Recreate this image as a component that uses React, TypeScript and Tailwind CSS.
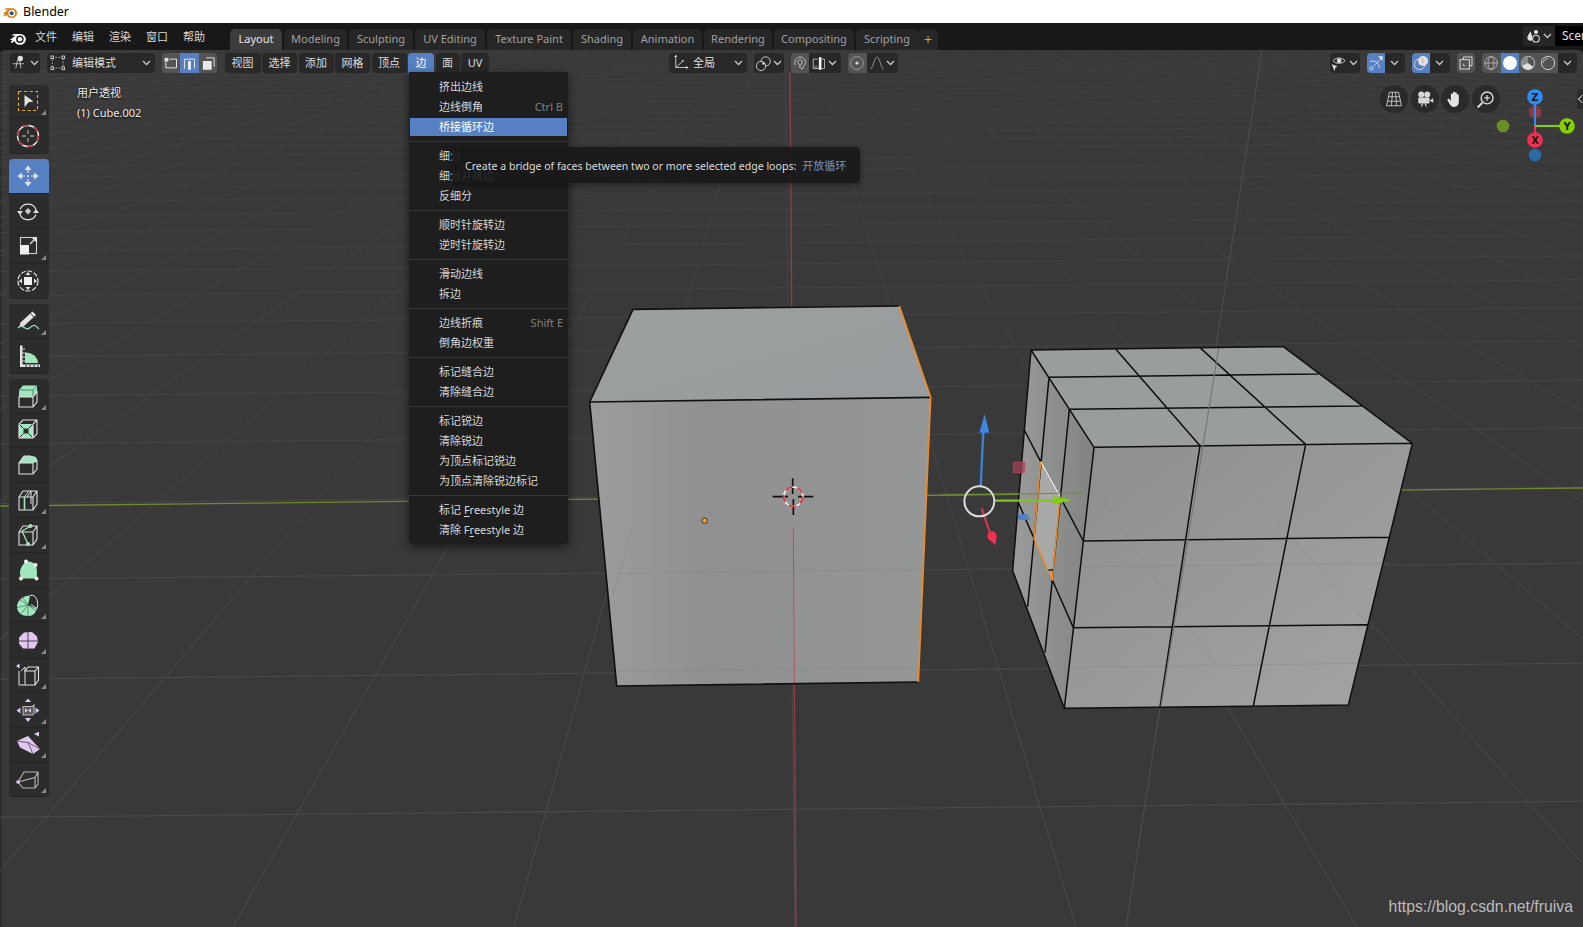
import type { ReactNode } from "react"

const WHITE = "#e2e2e2"
const GREEN = "#a2e6bd"
const PURPLE = "#e0c9f0"

function Ico({ children, size = 24, box = 24 }: { children: ReactNode; size?: number; box?: number }) {
    return (
        <svg width={size} height={size} viewBox={`0 0 ${box} ${box}`} fill="none" stroke={WHITE} strokeWidth="1" className="shrink-0">
            {children}
        </svg>
    )
}

function Chevron({ className = "" }: { className?: string }) {
    return (
        <svg width="9" height="6" viewBox="0 0 9 6" fill="none" stroke="#c8c8c8" strokeWidth="1.3" className={className}>
            <path d="M1 1l3.5 3.5L8 1" />
        </svg>
    )
}

// wire cube used by most of the mesh tools
function Box() {
    return <path d="M3 9L7 3H21V16L17 22H3ZM3 9H17V22M17 9L21 3" strokeWidth="1.1" />
}

const tools: { icon: ReactNode; corner?: boolean; active?: boolean }[][] = [
    [
        {
            corner: true,
            icon: (
                <Ico>
                    <rect x="2.5" y="2.5" width="19" height="19" stroke="#e0a83c" strokeWidth="1.2" strokeDasharray="3.2 2.4" />
                    <path d="M8.5 6l9 6.5-5 .8-4 5z" fill={WHITE} stroke="none" />
                </Ico>
            ),
        },
        {
            icon: (
                <Ico>
                    <circle cx="12" cy="12" r="10.5" stroke="#eeeeee" strokeWidth="1.3" />
                    <circle cx="12" cy="12" r="10.5" stroke="#b8303c" strokeWidth="1.4" strokeDasharray="6 5" />
                    <path d="M12 6v4M12 14v4M6 12h4M14 12h4" stroke="#9a9a9a" strokeWidth="1.3" />
                </Ico>
            ),
        },
    ],
    [
        {
            active: true,
            icon: (
                <Ico>
                    <path d="M12 1.5l3.5 4.5h-7zM12 22.5l3.5-4.5h-7zM1.5 12l4.5-3.5v7zM22.5 12l-4.5-3.5v7z" fill={WHITE} stroke="none" />
                    <path d="M12 6v3M12 15v3M6 12h3M15 12h3" strokeWidth="1.2" />
                    <circle cx="12" cy="12" r="1" fill={WHITE} stroke="none" />
                </Ico>
            ),
        },
        {
            icon: (
                <Ico>
                    <path d="M4 10.5A8.5 8 0 0 1 20 10.5M4 15.5A8.5 8 0 0 0 20 15.5" strokeWidth="1.2" />
                    <path d="M1 12h6l-3 4zM17 14h6l-3-4z" fill={WHITE} stroke="none" />
                    <path d="M12 9l3.2 3.2L12 15.4l-3.2-3.2z" fill="#c8c8c8" stroke="none" />
                </Ico>
            ),
        },
        {
            corner: true,
            icon: (
                <Ico>
                    <rect x="4.5" y="3.5" width="16" height="16" stroke="#cfcfcf" strokeWidth="1.1" />
                    <rect x="4" y="11" width="9" height="9.5" fill="#f0f0f0" stroke="none" />
                    <path d="M14 10l5.5-5.5" strokeWidth="1.3" />
                    <path d="M15.5 3.5H21V9z" fill={WHITE} stroke="none" />
                </Ico>
            ),
        },
        {
            icon: (
                <Ico>
                    <circle cx="12" cy="12" r="10" strokeWidth="1.2" strokeDasharray="5 1.6" />
                    <rect x="8" y="8" width="8" height="8" fill="#f0f0f0" stroke="none" />
                    <path d="M12 3l2.5 3h-5zM12 21l2.5-3h-5zM3 12l3-2.5v5zM21 12l-3-2.5v5z" fill={WHITE} stroke="none" />
                </Ico>
            ),
        },
    ],
    [
        {
            corner: true,
            icon: (
                <Ico>
                    <path d="M2 19C7 13 9 23 13.5 19S19 16 23 20" stroke={GREEN} strokeWidth="1.2" />
                    <path d="M3.5 17.5L4.5 13.5 16.5 2.5 20 6 8 17Z" fill={WHITE} stroke="none" />
                    <path d="M14.5 4.5L18 8" stroke="#2c2c2c" strokeWidth="0.9" />
                </Ico>
            ),
        },
        {
            icon: (
                <Ico>
                    <path d="M9 8.5V19H22A12 11 0 0 0 9 8.5z" fill={GREEN} stroke="none" />
                    <path d="M6.5 1.5H4V23H24V20.5H6.5z" fill={WHITE} stroke="none" />
                    <path d="M6.5 5H9M6.5 9H9M6.5 13H9M6.5 17H9" strokeWidth="1" />
                    <path d="M10 23v-2M14 23v-2M18 23v-2M22 23v-2" stroke="#333333" strokeWidth="1" />
                </Ico>
            ),
        },
    ],
    [
        {
            corner: true,
            icon: (
                <Ico>
                    <path d="M3 6L7 1.5H21V8L17 13H3Z" fill={GREEN} stroke="none" />
                    <path d="M3 6H17L21 1.5M17 6V13" stroke="#3b7a57" strokeWidth="0.8" />
                    <path d="M3 13H17L21 8V18L17 23H3ZM17 13V23" strokeWidth="1.1" />
                </Ico>
            ),
        },
        {
            icon: (
                <Ico>
                    <path d="M3 6H17V20H3Z" fill={GREEN} stroke="none" />
                    <path d="M7.5 10.5h5v5h-5z" fill="#2c2c2c" stroke="none" />
                    <path d="M3 6L7.5 10.5M17 6L12.5 10.5M3 20L7.5 15.5M17 20L12.5 15.5" stroke="#2c2c2c" />
                    <path d="M3 6L7 2H21V16L17 20H3ZM17 6L21 2M17 6V20" strokeWidth="1.1" />
                </Ico>
            ),
        },
        {
            icon: (
                <Ico>
                    <path d="M3 9L8 3H17L21 6V9L17 10H3Z" fill={GREEN} stroke="none" />
                    <circle cx="18" cy="6" r="2.6" fill={GREEN} stroke="none" />
                    <path d="M3 10H17V21H3ZM17 21L21 16V7M3 10L8 3H15" strokeWidth="1.1" />
                </Ico>
            ),
        },
        {
            corner: true,
            icon: (
                <Ico>
                    <Box />
                    <path d="M8.5 9V22" stroke={GREEN} strokeWidth="1.6" />
                    <path d="M8.5 9L12.5 3" stroke={GREEN} strokeWidth="1" />
                    <path d="M11 9L15 3V16" strokeWidth="1" />
                </Ico>
            ),
        },
        {
            corner: true,
            icon: (
                <Ico>
                    <Box />
                    <path d="M6 8L15 3M6 8L12 21" stroke={GREEN} strokeWidth="1.3" />
                    <circle cx="14.5" cy="3" r="2" fill={GREEN} stroke="none" />
                    <circle cx="12" cy="21" r="2" fill={GREEN} stroke="none" />
                </Ico>
            ),
        },
        {
            icon: (
                <Ico>
                    <path d="M10 3.5C14 3.5 17 4 19 6.5 21 9 21.5 14 20.5 20.5H5.5C3.5 16 3.5 13 5 10 6 7.5 8 5.5 10 3.5Z" fill={GREEN} stroke="none" />
                    <g fill="#f6f6f6" stroke="none">
                        <circle cx="10" cy="3.5" r="2" />
                        <circle cx="19.5" cy="7" r="2" />
                        <circle cx="5" cy="20.5" r="2" />
                        <circle cx="20.5" cy="20.5" r="2" />
                    </g>
                </Ico>
            ),
        },
        {
            corner: true,
            icon: (
                <Ico>
                    <path d="M12 12L14 2.5C8 2.5 1 7 1 13.5S6 23 12 23 19 20 21 16L12 12Z" fill={GREEN} stroke="none" />
                    <path d="M12 12L3 6M12 12L1 14.5M12 12L5 21M12 12V23M12 12L20 18M12 12L6 3.5" stroke="#3b7a57" strokeWidth="0.7" />
                    <path d="M14 2.5C20 0.5 23 9 21 15.5L15 11.5" strokeWidth="1" />
                </Ico>
            ),
        },
        {
            corner: true,
            icon: (
                <Ico>
                    <path d="M8 4.5L16 4 21 8.5 22 14 18.5 20.5H7L3 15.5V9.5Z" fill={PURPLE} stroke="none" />
                    <path d="M2.5 13H22M12 4.5V20.5" stroke="#4a4050" strokeWidth="1" />
                </Ico>
            ),
        },
        {
            corner: true,
            icon: (
                <Ico>
                    <path d="M9 4V22H3V8" strokeWidth="1" />
                    <path d="M9 22H19L22.5 17V4H12L9 8H19V22M19 8L22.5 4" strokeWidth="1.1" />
                    <path d="M5 8L9 4" strokeWidth="1" />
                    <path d="M0 3l3.5-2.5v5z" fill={PURPLE} stroke="none" />
                </Ico>
            ),
        },
        {
            corner: true,
            icon: (
                <Ico>
                    <path d="M7 8.5H16.5L18 7V15.5L16.5 17H7Z" stroke="#b8b8b8" strokeWidth="1.1" fill="#5a5a5a" />
                    <path d="M12 0.5l3 3.5h-6zM12 24l3-4h-6zM0.5 12.5l4-3v6zM23.5 12.5l-4-3v6z" fill={PURPLE} stroke="none" />
                    <path d="M9 10.5l3 2-3 2zM15 10.5l-3 2 3 2z" fill={PURPLE} stroke="none" />
                </Ico>
            ),
        },
        {
            corner: true,
            icon: (
                <Ico>
                    <path d="M1 9L12 4 24 17 17 22 4 15.5Z" fill={PURPLE} stroke="none" />
                    <path d="M12 10.5L17 22M1 9L12 10.5 24 17" stroke="#4a4050" strokeWidth="0.8" />
                    <path d="M18 2l5-2.5v5z" fill={PURPLE} stroke="none" />
                </Ico>
            ),
        },
        {
            corner: true,
            icon: (
                <Ico>
                    <path d="M2 15L8 5H22V17L19 21H7ZM2 15L19 10.5 22 5M19 10.5V21" stroke="#b8b8b8" strokeWidth="1.1" />
                    <circle cx="2" cy="15" r="1.8" fill={PURPLE} stroke="none" />
                </Ico>
            ),
        },
    ],
]

function ToolButton({ icon, corner, active }: { icon: ReactNode; corner?: boolean; active?: boolean }) {
    return (
        <div className={`relative flex h-[34.9px] items-center justify-center border-b border-[#242424] pr-[2px] first:rounded-t-[4px] last:rounded-b-[4px] ${active ? "bg-[#5680c2]" : "bg-[#2c2c2c]"}`}>
            {icon}
            {corner && <span className="absolute bottom-[3px] right-[3px] h-0 w-0 border-b-[5px] border-l-[5px] border-b-[#8a8a8a] border-l-transparent" />}
        </div>
    )
}

type MenuEntry = { label: ReactNode; key?: string; hot?: boolean } | "sep"

const menu: MenuEntry[] = [
    { label: "挤出边线" },
    { label: "边线倒角", key: "Ctrl B" },
    { label: "桥接循环边", hot: true },
    "sep",
    { label: "细分" },
    { label: "细分并排边" },
    { label: "反细分" },
    "sep",
    { label: "顺时针旋转边" },
    { label: "逆时针旋转边" },
    "sep",
    { label: "滑动边线" },
    { label: "拆边" },
    "sep",
    { label: "边线折痕", key: "Shift E" },
    { label: "倒角边权重" },
    "sep",
    { label: "标记缝合边" },
    { label: "清除缝合边" },
    "sep",
    { label: "标记锐边" },
    { label: "清除锐边" },
    { label: "为顶点标记锐边" },
    { label: "为顶点清除锐边标记" },
    "sep",
    { label: <>标记 <span className="underline underline-offset-2">F</span>reestyle 边</> },
    { label: <>清除 F<span className="underline underline-offset-2">r</span>eestyle 边</> },
]

const workspaces = [
    { name: "Layout", w: "w-[52px]" },
    { name: "Modeling", w: "w-[63px]" },
    { name: "Sculpting", w: "w-[64px]" },
    { name: "UV Editing", w: "w-[70px]" },
    { name: "Texture Paint", w: "w-[84px]" },
    { name: "Shading", w: "w-[58px]" },
    { name: "Animation", w: "w-[69px]" },
    { name: "Rendering", w: "w-[68px]" },
    { name: "Compositing", w: "w-[80px]" },
    { name: "Scripting", w: "w-[62px]" },
]

const headerMenus = [
    { name: "视图", w: "w-[36px]" },
    { name: "选择", w: "w-[35px]" },
    { name: "添加", w: "w-[35px]" },
    { name: "网格", w: "w-[35px]" },
    { name: "顶点", w: "w-[35px]" },
    { name: "边", w: "w-[26px]" },
    { name: "面", w: "w-[24px]" },
    { name: "UV", w: "w-[28px]" },
]

function BlenderLogo({ size, ring, core }: { size: number; ring: string; core: string }) {
    return (
        <svg width={size} height={size} viewBox="0 0 24 24" className="shrink-0">
            <path d="M1 14.5L9 8.5H3.5L6 6.5H14C19 6.5 22.5 9.5 22.5 13.5S19 21 14.5 21C10.5 21 8 19 7.5 16L5 18C4 18.6 2.5 18.2 2.6 16.6L5 14.5Z" fill={ring} />
            <circle cx="14.5" cy="13.7" r="5" fill={ring === "#ffffff" ? "#181818" : "#ffffff"} />
            <circle cx="14.5" cy="13.7" r="3" fill={core} />
        </svg>
    )
}

function Scene() {
    // fan of grid lines leaves one vanishing point, the others get closer towards it
    const vx = 784
    const vy = -47
    const fan = Array.from({ length: 81 }, (_, i) => 795 + 281 * (i - 40))
    const rows = Array.from({ length: 34 }, (_, n) => vy + 1 / (0.001157 + 0.00022 * n))

    return (
        <svg className="absolute inset-0" width="1583" height="877" viewBox="0 50 1583 877">
            <defs>
                <linearGradient id="gridFade" gradientUnits="userSpaceOnUse" x1="0" y1="60" x2="0" y2="700">
                    <stop offset="0" stopColor="#3d3d3d" />
                    <stop offset="0.4" stopColor="#434343" />
                    <stop offset="1" stopColor="#4a4a4a" />
                </linearGradient>
                <linearGradient id="frontA" x1="0" y1="0" x2="1" y2="0">
                    <stop offset="0" stopColor="#9b9d9d" />
                    <stop offset="0.35" stopColor="#8f908f" />
                    <stop offset="1" stopColor="#959696" />
                </linearGradient>
                <linearGradient id="topA" x1="0" y1="0" x2="1" y2="1">
                    <stop offset="0" stopColor="#9c9f9f" />
                    <stop offset="1" stopColor="#989c9e" />
                </linearGradient>
                <linearGradient id="frontB" x1="0" y1="0" x2="1" y2="1">
                    <stop offset="0" stopColor="#8d8e8e" />
                    <stop offset="1" stopColor="#a3a4a4" />
                </linearGradient>
                <linearGradient id="sideB" x1="0" y1="0" x2="1" y2="0">
                    <stop offset="0" stopColor="#9a9b9a" />
                    <stop offset="1" stopColor="#818482" />
                </linearGradient>
            </defs>

            <rect x="0" y="50" width="1583" height="877" fill="#393939" />
            <rect x="0" y="50" width="1.5" height="877" fill="#2a2a2a" />

            {fan.map((x) => (
                <line key={x} x1={vx} y1={vy} x2={x} y2={927} stroke="url(#gridFade)" strokeWidth="1" />
            ))}
            {rows.map((y) => (
                <line key={y} x1={0} y1={y} x2={1583} y2={y - 16} stroke="url(#gridFade)" strokeWidth="1" />
            ))}

            <line x1="0" y1="506" x2="1583" y2="488" stroke="#6a8a2c" strokeWidth="1.3" />
            <line x1="790" y1="72" x2="796" y2="927" stroke="#8c3f49" strokeWidth="1.3" />
            <line x1="1262" y1="50" x2="1126" y2="927" stroke="#4c4c4c" strokeWidth="1.2" />

            {/* left cube, points read off at 3x */}
            <g transform="translate(580 290) scale(0.33333)" strokeLinejoin="round">
                <path d="M29 336L159 58 958 48 1052 322Z" fill="url(#topA)" />
                <path d="M29 336L1052 322 1015 1176 110 1188Z" fill="url(#frontA)" />
                <path d="M155 720L100 915M90 850L1030 838M110 1143L1020 1133" stroke="#7d7e7e" strokeWidth="2" fill="none" opacity="0.5" />
                <path d="M640 715L643 1180" stroke="#a85560" strokeWidth="3" />
                <path d="M1015 1176L110 1188 29 336 159 58 958 48M29 336L1052 322" stroke="#101010" strokeWidth="5" fill="none" />
                <path d="M958 48L1052 322 1015 1176" stroke="#f08a24" strokeWidth="5" fill="none" />
                <path d="M578 620H624M654 620H700M638 565V612M640 628V675" stroke="#101010" strokeWidth="5" />
                <circle cx="640" cy="620" r="29" fill="none" stroke="#f2f2f2" strokeWidth="5" />
                <circle cx="640" cy="620" r="29" fill="none" stroke="#e02a35" strokeWidth="5" strokeDasharray="22 15" />
                <circle cx="374" cy="692" r="8" fill="#f8a030" stroke="#333333" strokeWidth="3" />
            </g>

            {/* right cube */}
            <g transform="translate(1000 330) scale(0.33333)" strokeLinejoin="round">
                <path d="M93 60L850 50 1237 340 282 352Z" fill="#9a9d9e" />
                <path d="M93 60L282 352 193 1135 38 722Z" fill="url(#sideB)" />
                <path d="M282 352L1237 340 1045 1125 193 1135Z" fill="url(#frontB)" />
                <path d="M122 395L180 500 157 750 102 625Z" fill="#a8aaaa" />
                <path d="M310 515L640 1000M775 510L1120 900M250 710L1170 700M210 1012L1080 1000" stroke="#7f8080" strokeWidth="2" fill="none" opacity="0.55" />
                <path
                    d="M93 60L850 50 1237 340 1045 1125 193 1135 38 722ZM282 352L1237 340M282 352L193 1135M93 60L282 352M147 142L955 132M208 238L1085 228M347 57L600 347M600 53L917 343M600 347L480 1132M917 343L760 1128M250 633L1168 622M220 893L1102 884M147 142L83 830M208 238L135 968M73 300L122 395M180 500L250 633M55 518L102 625M157 750L220 893M122 395L180 500"
                    stroke="#0e0e0e"
                    strokeWidth="4.5"
                    fill="none"
                />
                <path d="M656 54L483 1130" stroke="#767676" strokeWidth="3.5" />
                <path d="M122 395L180 500" stroke="#f4f4f4" strokeWidth="4.5" />
                <path d="M122 395L102 625 157 750 180 500" stroke="#f08a24" strokeWidth="4.5" fill="none" />
                <path d="M145 720H160" stroke="#0e0e0e" strokeWidth="4" />
            </g>

            {/* move gizmo */}
            <line x1="940" y1="495" x2="1083" y2="493" stroke="#6f8f32" strokeWidth="1.2" />
            <g transform="translate(940 400) scale(0.33333)">
                <path d="M122 258L130 95" stroke="#3f80d2" strokeWidth="7" />
                <path d="M134 42L118 98H148Z" fill="#3f86e0" />
                <path d="M165 302H345" stroke="#7fc31c" strokeWidth="7" />
                <path d="M398 300L340 288V314Z" fill="#84cc16" />
                <path d="M125 325L152 405" stroke="#c73a50" strokeWidth="7" />
                <circle cx="156" cy="408" r="14" fill="#f03050" />
                <path d="M143 414L166 436 170 408Z" fill="#f03050" />
                <circle cx="118" cy="304" r="45" fill="none" stroke="#dcdcdc" strokeWidth="6" />
                <path d="M220 187L255 186 253 218 220 218Z" fill="#a04152" fillOpacity="0.75" stroke="#c04a60" strokeWidth="2" />
                <path d="M232 343L262 342 270 359 236 360Z" fill="#4f82c4" />
            </g>

            {/* navigation gizmo */}
            <circle cx="1535" cy="112" r="6.3" fill="#8b3a46" />
            <circle cx="1503" cy="126" r="6.3" fill="#6b8f23" />
            <circle cx="1535" cy="155" r="6.3" fill="#2f6aa8" />
            <line x1="1535" y1="126" x2="1535" y2="97" stroke="#2e8cf0" strokeWidth="2" />
            <line x1="1535" y1="126" x2="1535" y2="140" stroke="#f03050" strokeWidth="2" />
            <line x1="1535" y1="126" x2="1567" y2="126" stroke="#84d000" strokeWidth="2" />
            <circle cx="1535" cy="97" r="7.8" fill="#2e8cf0" />
            <circle cx="1567" cy="126" r="7.8" fill="#84d000" />
            <circle cx="1535" cy="140" r="7.8" fill="#f03050" />
            <g fontFamily="'DejaVu Sans', sans-serif" fontSize="10" fontWeight="700" fill="#1a1a1a" textAnchor="middle">
                <text x="1535" y="101">Z</text>
                <text x="1567" y="130">Y</text>
                <text x="1535" y="144">X</text>
            </g>
        </svg>
    )
}

export default function App() {
    return (
        <div className="flex h-[927px] w-[1583px] flex-col overflow-hidden bg-[#181818] font-['Noto_Sans','Noto_Sans_CJK_SC',sans-serif] text-[11px] text-[#dcdcdc]">
            {/* window title */}
            <div className="flex h-[23px] shrink-0 items-center gap-[5px] bg-white pl-[2px] pt-px font-['Noto_Sans',sans-serif] text-[12.5px] text-black">
                <BlenderLogo size={16} ring="#ea7600" core="#265787" />
                <span>Blender</span>
            </div>

            {/* top bar */}
            <div className="flex h-[27px] shrink-0 items-end bg-[#181818]">
                <div className="mb-[3px] ml-[9px] flex w-[26px] shrink-0">
                    <BlenderLogo size={18} ring="#ffffff" core="#ffffff" />
                </div>
                <div className="mb-[5px] flex w-[195px] shrink-0 gap-[15px] text-[#d8d8d8]">
                    <span>文件</span>
                    <span>编辑</span>
                    <span>渲染</span>
                    <span>窗口</span>
                    <span>帮助</span>
                </div>
                <div className="flex gap-[2px]">
                    {workspaces.map((tab, i) => (
                        <div
                            key={tab.name}
                            className={`flex h-[21px] items-center justify-center rounded-t-[5px] ${tab.w} ${i === 0 ? "bg-[#3c3c3c] text-[#e6e6e6]" : "bg-[#262626] text-[#a0a0a0]"}`}
                        >
                            {tab.name}
                        </div>
                    ))}
                </div>
                <div className="flex h-[21px] w-[20px] items-center justify-center rounded-t-[5px] bg-[#262626] text-[15px] leading-none text-[#a0a0a0]">+</div>
                <div className="mb-[4px] ml-auto flex h-[20px]">
                    <div className="flex w-[32px] items-center justify-center gap-[1px] rounded-l-[4px] bg-[#262626]">
                        <Ico size={16}>
                            <path d="M7 5C5 9 2 11 2 15a4.5 4.5 0 0 0 7 3.5L9 12z" fill={WHITE} stroke="none" />
                            <circle cx="15" cy="16" r="5" strokeWidth="1.6" />
                            <circle cx="15" cy="6" r="3" fill={WHITE} stroke="none" />
                        </Ico>
                        <Chevron />
                    </div>
                    <div className="flex w-[28px] items-center overflow-hidden whitespace-nowrap bg-black pl-[7px] text-[12px] text-[#e0e0e0]">Scene</div>
                </div>
            </div>

            {/* viewport */}
            <div className="relative flex-1 overflow-hidden rounded-t-[5px] bg-[#393939]">
                <Scene />

                <div className="relative flex pl-[10px] pt-[3px]">
                    <div className="flex h-[20px] w-[30px] items-center justify-center rounded-[4px] bg-[#282828]">
                        <Ico size={18}>
                            <path d="M1 13H16M5 19L7.5 8M12 19L10 8" strokeWidth="1" />
                            <circle cx="11" cy="6" r="3.6" fill={WHITE} stroke="none" />
                        </Ico>
                        <Chevron />
                    </div>
                    <div className="ml-[7px] flex h-[20px] w-[108px] items-center rounded-[4px] bg-[#282828] pl-[3px] pr-[4px]">
                        <Ico size={16}>
                            <rect x="3.5" y="3.5" width="16" height="16" strokeWidth="1" strokeDasharray="2.5 2" />
                            <rect x="1.5" y="1.5" width="4" height="4" strokeWidth="1.2" fill="#282828" />
                            <rect x="18" y="1.5" width="4" height="4" strokeWidth="1.2" fill="#282828" />
                            <rect x="1.5" y="18" width="4" height="4" strokeWidth="1.2" fill="#282828" />
                            <rect x="18" y="18" width="4" height="4" strokeWidth="1.2" fill="#282828" />
                        </Ico>
                        <span className="ml-[6px]">编辑模式</span>
                        <Chevron className="ml-auto" />
                    </div>

                    <div className="ml-[7px] flex h-[20px] overflow-hidden rounded-[4px]">
                        <div className="flex w-[18px] items-center justify-center bg-[#545454]">
                            <Ico size={15}>
                                <path d="M9 5H20V19H3V10" strokeWidth="1.6" />
                                <rect x="1" y="3" width="6" height="6" fill={WHITE} stroke="none" />
                            </Ico>
                        </div>
                        <div className="flex w-[19px] items-center justify-center bg-[#5680c2]">
                            <Ico size={15}>
                                <path d="M4 20V5H20V20" strokeWidth="1.6" />
                                <rect x="10" y="8" width="4" height="14" fill="#ffffff" stroke="none" />
                            </Ico>
                        </div>
                        <div className="flex w-[18px] items-center justify-center bg-[#545454]">
                            <Ico size={15}>
                                <path d="M8 3H21V17" strokeWidth="1.5" />
                                <rect x="3" y="8" width="14" height="14" fill="#e8e8e8" stroke="none" />
                            </Ico>
                        </div>
                    </div>

                    <div className="ml-[7.5px] flex gap-[1.5px]">
                        {headerMenus.map((m) => (
                            <div
                                key={m.name}
                                className={`flex h-[20px] items-center justify-center ${m.w} ${m.name === "边" ? "rounded-t-[4px] bg-[#5680c2] text-white" : "rounded-[4px] bg-[#282828]"}`}
                            >
                                {m.name}
                            </div>
                        ))}
                    </div>

                    <div className="ml-[179.5px] flex h-[20px] w-[78px] items-center rounded-[4px] bg-[#282828] pl-[3px] pr-[4px]">
                        <Ico size={18}>
                            <path d="M5 2V18H21M5 18L15 9" strokeWidth="1.1" />
                            <path d="M5 1l-2 3h4zM22 18l-3-2v4zM16 8l-3.5 1 2 2z" fill={WHITE} stroke="none" />
                        </Ico>
                        <span className="ml-[3.5px]">全局</span>
                        <Chevron className="ml-auto" />
                    </div>

                    <div className="ml-[7px] flex h-[20px] w-[30px] items-center justify-center gap-[1px] rounded-[4px] bg-[#282828]">
                        <Ico size={17}>
                            <circle cx="8.5" cy="15.5" r="6.5" strokeWidth="1.2" />
                            <path d="M8.5 9A6.5 6.5 0 1 1 15.5 15.5" strokeWidth="1.2" />
                            <circle cx="12" cy="12" r="1.8" fill={WHITE} stroke="none" />
                        </Ico>
                        <Chevron />
                    </div>

                    <div className="ml-[7px] flex h-[20px] overflow-hidden rounded-[4px]">
                        <div className="flex w-[18px] items-center justify-center bg-[#545454]">
                            <Ico size={16}>
                                <path d="M5 15C2 9 7 3 12 3S22 8 20 13L15 21 11 18 15 12C16 9 14 7 12 7S8 9 9 12L12 16" stroke="#c8c8c8" strokeWidth="1.4" />
                            </Ico>
                        </div>
                        <div className="flex w-[32px] items-center justify-center gap-[1px] bg-[#282828]">
                            <Ico size={15}>
                                <path d="M9 5H2V20H12M15 5H20V20H15" stroke="#c8c8c8" strokeWidth="1.3" />
                                <path d="M5 20V15M8 20V15" stroke="#c8c8c8" />
                                <rect x="11" y="2" width="4" height="20" fill="#ffffff" stroke="none" />
                            </Ico>
                            <Chevron />
                        </div>
                    </div>

                    <div className="ml-[7px] flex h-[20px] overflow-hidden rounded-[4px]">
                        <div className="flex w-[19px] items-center justify-center bg-[#545454]">
                            <Ico size={16}>
                                <circle cx="12" cy="12" r="9.5" stroke="#a8a8a8" strokeWidth="1.3" />
                                <circle cx="12" cy="12" r="2.4" fill="#d8d8d8" stroke="none" />
                            </Ico>
                        </div>
                        <div className="flex w-[31px] items-center justify-center gap-[1px] bg-[#282828]">
                            <Ico size={16}>
                                <path d="M2 21C6 21 8 3 12 3S18 21 22 21" stroke="#a8a8a8" strokeWidth="1.2" />
                            </Ico>
                            <Chevron />
                        </div>
                    </div>

                    <div className="ml-[432px] flex h-[20px] w-[30px] items-center justify-center gap-[1px] rounded-[4px] bg-[#282828]">
                        <Ico size={17}>
                            <path d="M3 8C6 3 16 3 20 8 16 13 6 13 3 8Z" strokeWidth="1.2" />
                            <circle cx="11.5" cy="8" r="3.2" fill={WHITE} stroke="none" />
                            <path d="M1 13l8 3-3 2-1 5z" fill={WHITE} stroke="none" />
                        </Ico>
                        <Chevron />
                    </div>

                    <div className="ml-[7px] flex h-[20px] overflow-hidden rounded-[4px]">
                        <div className="flex w-[18px] items-center justify-center bg-[#5680c2]">
                            <Ico size={16}>
                                <circle cx="5" cy="20" r="2.5" strokeWidth="1.3" />
                                <path d="M3 10C11 7 16 11 17 20M8 17L21 4" strokeWidth="1.3" />
                                <path d="M15 2H22V9z" fill={WHITE} stroke="none" />
                            </Ico>
                        </div>
                        <div className="flex w-[20px] items-center justify-center bg-[#282828]">
                            <Chevron />
                        </div>
                    </div>

                    <div className="ml-[7px] flex h-[20px] overflow-hidden rounded-[4px]">
                        <div className="flex w-[18px] items-center justify-center bg-[#5680c2]">
                            <Ico size={16}>
                                <circle cx="10" cy="14" r="8" strokeWidth="1.4" />
                                <circle cx="15" cy="9" r="7.5" fill={WHITE} stroke="none" />
                                <path d="M13 5l3 3M13 9l3 3" stroke="#5680c2" />
                            </Ico>
                        </div>
                        <div className="flex w-[20px] items-center justify-center bg-[#282828]">
                            <Chevron />
                        </div>
                    </div>

                    <div className="ml-[7px] flex h-[20px] w-[18px] items-center justify-center rounded-[4px] bg-[#545454]">
                        <Ico size={16}>
                            <path d="M8 7V3H21V16H17" strokeWidth="1.4" />
                            <rect x="3" y="7" width="14" height="14" strokeWidth="1.4" />
                            <path d="M8 13v3h3" strokeWidth="1.2" />
                        </Ico>
                    </div>

                    <div className="ml-[7px] flex h-[20px] overflow-hidden rounded-[4px]">
                        <div className="flex w-[19px] items-center justify-center bg-[#545454]">
                            <Ico size={16}>
                                <circle cx="12" cy="12" r="9.5" stroke="#d0d0d0" strokeWidth="1.1" />
                                <ellipse cx="12" cy="12" rx="4.5" ry="9.5" stroke="#d0d0d0" strokeWidth="1" />
                                <path d="M2.5 12H21.5" stroke="#d0d0d0" />
                            </Ico>
                        </div>
                        <div className="flex w-[18px] items-center justify-center bg-[#5680c2]">
                            <Ico size={16}>
                                <circle cx="12" cy="12" r="10.5" fill="#ffffff" stroke="none" />
                            </Ico>
                        </div>
                        <div className="flex w-[19px] items-center justify-center bg-[#545454]">
                            <Ico size={16}>
                                <circle cx="12" cy="12" r="10" stroke="#d8d8d8" strokeWidth="1.2" />
                                <path d="M12 2V12L20 18A10 10 0 0 1 3 16Z" fill="#e0e0e0" stroke="none" />
                                <path d="M12 2A10 10 0 0 0 3 16L12 12Z" fill="#8a8a8a" stroke="none" />
                            </Ico>
                        </div>
                        <div className="flex w-[20px] items-center justify-center bg-[#545454]">
                            <Ico size={16}>
                                <circle cx="12" cy="12" r="10" stroke="#d8d8d8" strokeWidth="1.4" />
                                <path d="M5 12A7 7 0 0 1 12 5" stroke="#d8d8d8" strokeWidth="1.3" />
                            </Ico>
                        </div>
                        <div className="flex w-[19px] items-center justify-center bg-[#282828]">
                            <Chevron />
                        </div>
                    </div>
                </div>

                <div className="relative flex">
                    <div className="ml-[9px] mt-[11.5px] flex w-[40px] shrink-0 flex-col gap-[5px]">
                        {tools.map((group, i) => (
                            <div key={i} className="flex flex-col">
                                {group.map((tool, j) => (
                                    <ToolButton key={j} {...tool} />
                                ))}
                            </div>
                        ))}
                    </div>
                    <div className="ml-[28px] mt-[13px] flex flex-col gap-[6px] leading-[14px] text-[#ececec] [text-shadow:0_1px_2px_#000]">
                        <span>用户透视</span>
                        <span>(1) Cube.002</span>
                    </div>
                </div>

                {/* open edge menu */}
                <div className="absolute left-[409px] top-[22px] w-[159px] rounded-b-[4px] bg-[#1e1e1e] pb-[4px] pt-[5px] shadow-[0_3px_10px_rgba(0,0,0,0.55)]">
                    {menu.map((item, i) =>
                        item === "sep" ? (
                            <div key={i} className="flex h-[9px] items-center">
                                <div className="h-px w-full bg-[#383838]" />
                            </div>
                        ) : (
                            <div
                                key={i}
                                className={`flex h-[20px] items-center justify-between px-[1px] ${item.hot ? "bg-[#5680c2] bg-clip-content py-px text-white" : "text-[#d8d8d8]"}`}
                            >
                                <span className="pl-[29px]">{item.label}</span>
                                {item.key && <span className="pr-[4px] text-[#808080]">{item.key}</span>}
                            </div>
                        ),
                    )}
                </div>

                {/* hover tooltip */}
                <div className="absolute left-[452px] top-[97px] flex h-[36px] w-[408px] items-center gap-[6px] whitespace-nowrap rounded-[4px] bg-[#181818]/90 pl-[13px] pt-[3px] text-[10.57px] text-[#dcdcdc] shadow-[0_2px_6px_rgba(0,0,0,0.4)]">
                    <span>Create a bridge of faces between two or more selected edge loops:</span>
                    <span className="text-[11px] text-[#7393c8]">开放循环</span>
                </div>

                {/* viewport navigation buttons */}
                <div className="absolute left-[1380px] top-[35px] flex gap-[2.5px]">
                    <div className="flex h-[28px] w-[28px] items-center justify-center rounded-full bg-[#2a2a2a]">
                        <Ico size={18}>
                            <path d="M6 3H18L22 21H2ZM4.5 9H19.5M3.3 15H20.7M10 3L8.5 21M14 3L15.5 21" stroke="#d8d8d8" strokeWidth="1.1" />
                        </Ico>
                    </div>
                    <div className="flex h-[28px] w-[28px] items-center justify-center rounded-full bg-[#2a2a2a]">
                        <Ico size={18}>
                            <circle cx="7" cy="6" r="4" fill="#d8d8d8" stroke="none" />
                            <circle cx="15" cy="6" r="4" fill="#d8d8d8" stroke="none" />
                            <rect x="3" y="10" width="15" height="8" rx="1" fill="#d8d8d8" stroke="none" />
                            <path d="M18 14l5-3v6z" fill="#d8d8d8" stroke="none" />
                            <path d="M9 18l-2 4M12 18l2 4" stroke="#d8d8d8" strokeWidth="1.5" />
                        </Ico>
                    </div>
                    <div className="flex h-[28px] w-[28px] items-center justify-center rounded-full bg-[#2a2a2a]">
                        <Ico size={20}>
                            <path d="M7 13V6.5a1.2 1.2 0 0 1 2.4 0V11V4.5a1.2 1.2 0 0 1 2.4 0V11V5a1.2 1.2 0 0 1 2.4 0V11.5V7.5a1.2 1.2 0 0 1 2.4 0V15C16.6 19 14 21.5 11 21.5 8 21.5 6.8 19.5 5 17L3 13.5C2.6 12 4.2 11.3 5.2 12.3L7 14Z" fill="#e4e4e4" stroke="none" />
                        </Ico>
                    </div>
                    <div className="flex h-[28px] w-[28px] items-center justify-center rounded-full bg-[#2a2a2a]">
                        <Ico size={19}>
                            <circle cx="14" cy="10" r="7.5" stroke="#d8d8d8" strokeWidth="1.8" />
                            <path d="M8 16L2 22" stroke="#d8d8d8" strokeWidth="2.6" />
                            <path d="M14 6.5V13.5M10.5 10H17.5" stroke="#d8d8d8" strokeWidth="1.6" />
                        </Ico>
                    </div>
                </div>

                <div className="absolute left-[1577px] top-[39px] flex h-[20px] w-[8px] items-center rounded-l-[4px] bg-[#2a2a2a] pl-[2px]">
                    <span className="h-[6px] w-[6px] rotate-45 border-b border-l border-[#bdbdbd]" />
                </div>

                <span className="absolute bottom-[11px] right-[10px] font-['Liberation_Sans',sans-serif] text-[15.8px] leading-[18px] text-[#bcbcbc]">
                    https://blog.csdn.net/fruiva
                </span>
            </div>
        </div>
    )
}
